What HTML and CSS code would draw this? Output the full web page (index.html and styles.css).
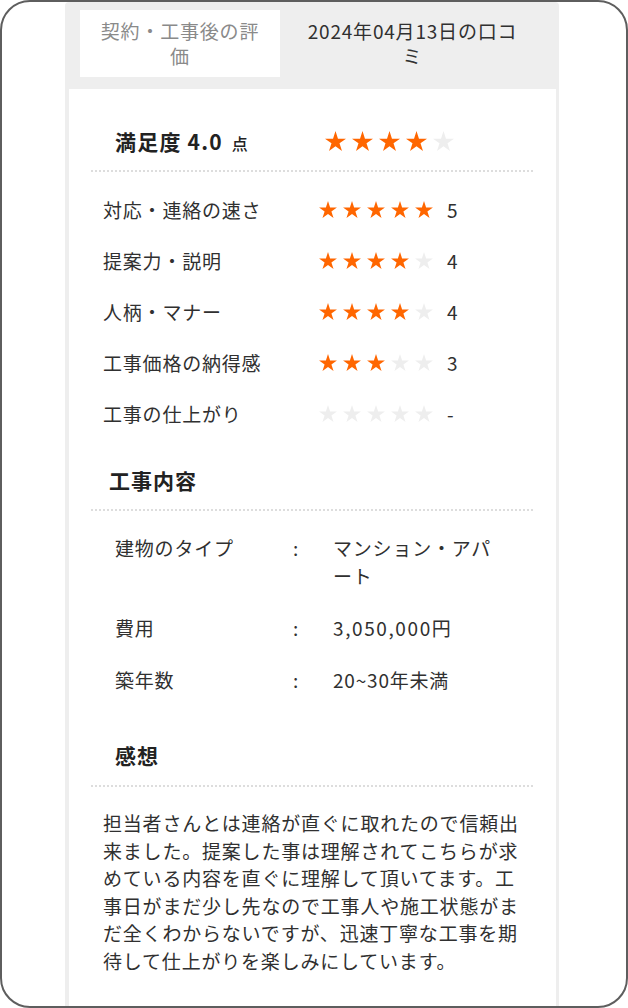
FILE: index.html
```html
<!DOCTYPE html>
<html lang="ja">
<head>
<meta charset="utf-8">
<title>口コミ</title>
<link rel="stylesheet" href="styles.css">
</head>
<body>
<div class="frame">
  <div class="panel">
    <div class="tabs">
      <div class="tab tab-first">契約・工事後の評価</div>
      <div class="tab tab-second">2024年04月13日の口コミ</div>
    </div>
    <div class="content">
      <div class="summary">
        <div class="summary-label"><span class="summary-title">満足度 4.0</span><span class="summary-unit">点</span></div>
        <div class="stars stars-lg">
          <svg class="star on" viewBox="0 0 19.02 18.09"><polygon points="9.51,0 11.755,6.91 19.02,6.91 13.14,11.18 15.39,18.09 9.51,13.82 3.63,18.09 5.88,11.18 0,6.91 7.265,6.91"/></svg>
          <svg class="star on" viewBox="0 0 19.02 18.09"><polygon points="9.51,0 11.755,6.91 19.02,6.91 13.14,11.18 15.39,18.09 9.51,13.82 3.63,18.09 5.88,11.18 0,6.91 7.265,6.91"/></svg>
          <svg class="star on" viewBox="0 0 19.02 18.09"><polygon points="9.51,0 11.755,6.91 19.02,6.91 13.14,11.18 15.39,18.09 9.51,13.82 3.63,18.09 5.88,11.18 0,6.91 7.265,6.91"/></svg>
          <svg class="star on" viewBox="0 0 19.02 18.09"><polygon points="9.51,0 11.755,6.91 19.02,6.91 13.14,11.18 15.39,18.09 9.51,13.82 3.63,18.09 5.88,11.18 0,6.91 7.265,6.91"/></svg>
          <svg class="star off" viewBox="0 0 19.02 18.09"><polygon points="9.51,0 11.755,6.91 19.02,6.91 13.14,11.18 15.39,18.09 9.51,13.82 3.63,18.09 5.88,11.18 0,6.91 7.265,6.91"/></svg>
        </div>
      </div>

      <ul class="ratings">
        <li class="rating-row">
          <span class="rating-label">対応・連絡の速さ</span>
          <span class="stars">
            <svg class="star on" viewBox="0 0 19.02 18.09"><polygon points="9.51,0 11.755,6.91 19.02,6.91 13.14,11.18 15.39,18.09 9.51,13.82 3.63,18.09 5.88,11.18 0,6.91 7.265,6.91"/></svg>
            <svg class="star on" viewBox="0 0 19.02 18.09"><polygon points="9.51,0 11.755,6.91 19.02,6.91 13.14,11.18 15.39,18.09 9.51,13.82 3.63,18.09 5.88,11.18 0,6.91 7.265,6.91"/></svg>
            <svg class="star on" viewBox="0 0 19.02 18.09"><polygon points="9.51,0 11.755,6.91 19.02,6.91 13.14,11.18 15.39,18.09 9.51,13.82 3.63,18.09 5.88,11.18 0,6.91 7.265,6.91"/></svg>
            <svg class="star on" viewBox="0 0 19.02 18.09"><polygon points="9.51,0 11.755,6.91 19.02,6.91 13.14,11.18 15.39,18.09 9.51,13.82 3.63,18.09 5.88,11.18 0,6.91 7.265,6.91"/></svg>
            <svg class="star on" viewBox="0 0 19.02 18.09"><polygon points="9.51,0 11.755,6.91 19.02,6.91 13.14,11.18 15.39,18.09 9.51,13.82 3.63,18.09 5.88,11.18 0,6.91 7.265,6.91"/></svg>
          </span>
          <span class="rating-value">5</span>
        </li>
        <li class="rating-row">
          <span class="rating-label">提案力・説明</span>
          <span class="stars">
            <svg class="star on" viewBox="0 0 19.02 18.09"><polygon points="9.51,0 11.755,6.91 19.02,6.91 13.14,11.18 15.39,18.09 9.51,13.82 3.63,18.09 5.88,11.18 0,6.91 7.265,6.91"/></svg>
            <svg class="star on" viewBox="0 0 19.02 18.09"><polygon points="9.51,0 11.755,6.91 19.02,6.91 13.14,11.18 15.39,18.09 9.51,13.82 3.63,18.09 5.88,11.18 0,6.91 7.265,6.91"/></svg>
            <svg class="star on" viewBox="0 0 19.02 18.09"><polygon points="9.51,0 11.755,6.91 19.02,6.91 13.14,11.18 15.39,18.09 9.51,13.82 3.63,18.09 5.88,11.18 0,6.91 7.265,6.91"/></svg>
            <svg class="star on" viewBox="0 0 19.02 18.09"><polygon points="9.51,0 11.755,6.91 19.02,6.91 13.14,11.18 15.39,18.09 9.51,13.82 3.63,18.09 5.88,11.18 0,6.91 7.265,6.91"/></svg>
            <svg class="star off" viewBox="0 0 19.02 18.09"><polygon points="9.51,0 11.755,6.91 19.02,6.91 13.14,11.18 15.39,18.09 9.51,13.82 3.63,18.09 5.88,11.18 0,6.91 7.265,6.91"/></svg>
          </span>
          <span class="rating-value">4</span>
        </li>
        <li class="rating-row">
          <span class="rating-label">人柄・マナー</span>
          <span class="stars">
            <svg class="star on" viewBox="0 0 19.02 18.09"><polygon points="9.51,0 11.755,6.91 19.02,6.91 13.14,11.18 15.39,18.09 9.51,13.82 3.63,18.09 5.88,11.18 0,6.91 7.265,6.91"/></svg>
            <svg class="star on" viewBox="0 0 19.02 18.09"><polygon points="9.51,0 11.755,6.91 19.02,6.91 13.14,11.18 15.39,18.09 9.51,13.82 3.63,18.09 5.88,11.18 0,6.91 7.265,6.91"/></svg>
            <svg class="star on" viewBox="0 0 19.02 18.09"><polygon points="9.51,0 11.755,6.91 19.02,6.91 13.14,11.18 15.39,18.09 9.51,13.82 3.63,18.09 5.88,11.18 0,6.91 7.265,6.91"/></svg>
            <svg class="star on" viewBox="0 0 19.02 18.09"><polygon points="9.51,0 11.755,6.91 19.02,6.91 13.14,11.18 15.39,18.09 9.51,13.82 3.63,18.09 5.88,11.18 0,6.91 7.265,6.91"/></svg>
            <svg class="star off" viewBox="0 0 19.02 18.09"><polygon points="9.51,0 11.755,6.91 19.02,6.91 13.14,11.18 15.39,18.09 9.51,13.82 3.63,18.09 5.88,11.18 0,6.91 7.265,6.91"/></svg>
          </span>
          <span class="rating-value">4</span>
        </li>
        <li class="rating-row">
          <span class="rating-label">工事価格の納得感</span>
          <span class="stars">
            <svg class="star on" viewBox="0 0 19.02 18.09"><polygon points="9.51,0 11.755,6.91 19.02,6.91 13.14,11.18 15.39,18.09 9.51,13.82 3.63,18.09 5.88,11.18 0,6.91 7.265,6.91"/></svg>
            <svg class="star on" viewBox="0 0 19.02 18.09"><polygon points="9.51,0 11.755,6.91 19.02,6.91 13.14,11.18 15.39,18.09 9.51,13.82 3.63,18.09 5.88,11.18 0,6.91 7.265,6.91"/></svg>
            <svg class="star on" viewBox="0 0 19.02 18.09"><polygon points="9.51,0 11.755,6.91 19.02,6.91 13.14,11.18 15.39,18.09 9.51,13.82 3.63,18.09 5.88,11.18 0,6.91 7.265,6.91"/></svg>
            <svg class="star off" viewBox="0 0 19.02 18.09"><polygon points="9.51,0 11.755,6.91 19.02,6.91 13.14,11.18 15.39,18.09 9.51,13.82 3.63,18.09 5.88,11.18 0,6.91 7.265,6.91"/></svg>
            <svg class="star off" viewBox="0 0 19.02 18.09"><polygon points="9.51,0 11.755,6.91 19.02,6.91 13.14,11.18 15.39,18.09 9.51,13.82 3.63,18.09 5.88,11.18 0,6.91 7.265,6.91"/></svg>
          </span>
          <span class="rating-value">3</span>
        </li>
        <li class="rating-row">
          <span class="rating-label">工事の仕上がり</span>
          <span class="stars">
            <svg class="star off" viewBox="0 0 19.02 18.09"><polygon points="9.51,0 11.755,6.91 19.02,6.91 13.14,11.18 15.39,18.09 9.51,13.82 3.63,18.09 5.88,11.18 0,6.91 7.265,6.91"/></svg>
            <svg class="star off" viewBox="0 0 19.02 18.09"><polygon points="9.51,0 11.755,6.91 19.02,6.91 13.14,11.18 15.39,18.09 9.51,13.82 3.63,18.09 5.88,11.18 0,6.91 7.265,6.91"/></svg>
            <svg class="star off" viewBox="0 0 19.02 18.09"><polygon points="9.51,0 11.755,6.91 19.02,6.91 13.14,11.18 15.39,18.09 9.51,13.82 3.63,18.09 5.88,11.18 0,6.91 7.265,6.91"/></svg>
            <svg class="star off" viewBox="0 0 19.02 18.09"><polygon points="9.51,0 11.755,6.91 19.02,6.91 13.14,11.18 15.39,18.09 9.51,13.82 3.63,18.09 5.88,11.18 0,6.91 7.265,6.91"/></svg>
            <svg class="star off" viewBox="0 0 19.02 18.09"><polygon points="9.51,0 11.755,6.91 19.02,6.91 13.14,11.18 15.39,18.09 9.51,13.82 3.63,18.09 5.88,11.18 0,6.91 7.265,6.91"/></svg>
          </span>
          <span class="rating-value">-</span>
        </li>
      </ul>

      <h2 class="section-title section-title-work">工事内容</h2>
      <dl class="details">
        <div class="detail-row">
          <dt class="detail-label">建物のタイプ</dt>
          <dd class="detail-colon">:</dd>
          <dd class="detail-value">マンション・アパート</dd>
        </div>
        <div class="detail-row">
          <dt class="detail-label">費用</dt>
          <dd class="detail-colon">:</dd>
          <dd class="detail-value detail-num">3,050,000円</dd>
        </div>
        <div class="detail-row">
          <dt class="detail-label">築年数</dt>
          <dd class="detail-colon">:</dd>
          <dd class="detail-value">20~30年未満</dd>
        </div>
      </dl>

      <h2 class="section-title section-title-impression">感想</h2>
      <p class="comment">担当者さんとは連絡が直ぐに取れたので信頼出来ました。提案した事は理解されてこちらが求めている内容を直ぐに理解して頂いてます。工事日がまだ少し先なので工事人や施工状態がまだ全くわからないですが、迅速丁寧な工事を期待して仕上がりを楽しみにしています。</p>
    </div>
  </div>
</div>
</body>
</html>
```

FILE: styles.css
```css
* {
  box-sizing: border-box;
}

html, body {
  margin: 0;
  padding: 0;
  background: #ffffff;
}

body {
  font-family: "Noto Sans CJK JP", "Noto Sans", sans-serif;
  color: #303030;
}

.frame {
  width: 628px;
  height: 1008px;
  border: 2px solid #5e5e5e;
  border-radius: 30px;
  background: #ffffff;
  overflow: hidden;
}

.panel {
  width: 494px;
  height: 100%;
  margin-left: 63px;
  background: #eeeeee;
  border-radius: 4px 4px 0 0;
  display: flex;
  flex-direction: column;
}

.tabs {
  display: flex;
  padding: 8px 14px 12px 15px;
}

.tab {
  height: 67px;
  padding: 8px 12px 9px;
  font-size: 19px;
  line-height: 25px;
  letter-spacing: 0.8px;
  text-align: center;
}

.tab-first {
  width: 200px;
  background: #ffffff;
  color: #8a8a8a;
}

.tab-second {
  flex: 1;
  padding-left: 20px;
  padding-right: 20px;
  color: #303030;
}

.content {
  flex: 1;
  margin: 0 3px 0 4px;
  padding: 0 23px 0 22px;
  background: #ffffff;
}

.summary {
  display: flex;
  align-items: center;
  height: 83px;
  padding: 32px 0 9px 24px;
  border-bottom: 2px dotted #dddddd;
}

.summary-label {
  width: 210px;
  display: flex;
  align-items: baseline;
  color: #222222;
}

.summary-title {
  font-size: 21px;
  font-weight: bold;
  letter-spacing: 1.2px;
}

.summary-unit {
  margin-left: 9px;
  font-size: 16px;
  font-weight: 500;
}

.stars {
  display: flex;
  align-items: center;
  gap: 6px;
}

.star {
  width: 18px;
  height: 17px;
  display: block;
}

.stars-lg .star {
  width: 21px;
  height: 20px;
}

.star.on {
  fill: #ff6600;
}

.star.off {
  fill: #eeeeee;
}

.ratings {
  list-style: none;
  margin: 12px 0 0;
  padding: 0 0 0 12px;
}

.rating-row {
  display: flex;
  align-items: center;
  height: 51px;
  font-size: 19px;
  letter-spacing: 0.8px;
}

.rating-label {
  width: 216px;
}

.rating-value {
  margin-left: 14px;
}

.section-title {
  margin: 0;
  line-height: 40px;
  font-size: 21px;
  font-weight: bold;
  letter-spacing: 1px;
  color: #222222;
  border-bottom: 2px dotted #dddddd;
}

.section-title-work {
  height: 51px;
  margin-top: 21px;
  padding: 0 0 9px 18px;
}

.section-title-impression {
  height: 52px;
  margin-top: 41px;
  padding: 0 0 10px 24px;
}

.details {
  margin: 23px 0 0;
  padding: 0 0 0 24px;
}

.detail-row {
  display: grid;
  grid-template-columns: 178px 40px 170px;
  font-size: 19px;
  line-height: 28px;
  letter-spacing: 0.8px;
}

.detail-row + .detail-row {
  margin-top: 24px;
}

.detail-row dt,
.detail-row dd {
  margin: 0;
}

.detail-num {
  letter-spacing: 1.6px;
}

.comment {
  margin: 22px 0 0;
  padding: 0 0 0 12px;
  font-size: 19px;
  line-height: 27.5px;
  letter-spacing: 0.8px;
}
```
